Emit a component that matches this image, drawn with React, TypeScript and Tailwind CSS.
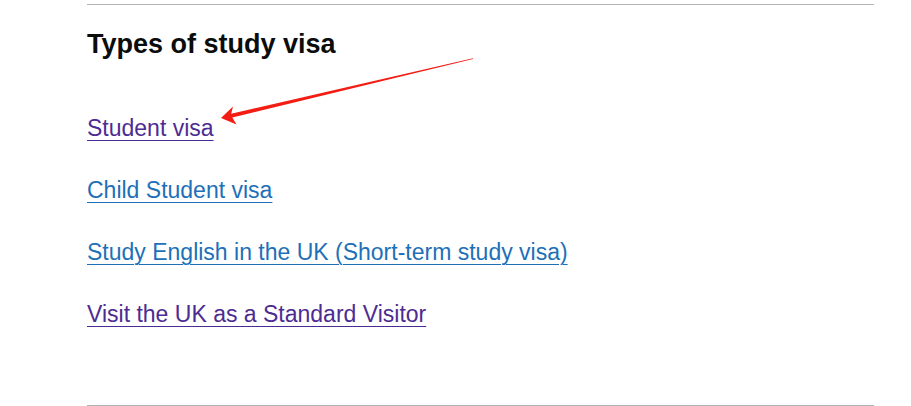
import React from 'react';

const visaLinks = [
    { label: 'Student visa', visited: true },
    { label: 'Child Student visa', visited: false },
    { label: 'Study English in the UK (Short-term study visa)', visited: false },
    { label: 'Visit the UK as a Standard Visitor', visited: true },
];

const Arrow: React.FC = () => (
    <svg className="absolute inset-0 pointer-events-none" width="911" height="406" viewBox="0 0 911 406">
        <polygon
            points="221,118 233,106.5 231.2,113.8 473,58.2 473,59 232.3,117.6 236.5,124.5"
            fill="#f41d14"
        />
    </svg>
);

const App: React.FC = () => {
    return (
        <div className="relative w-[911px] h-[406px] bg-white overflow-hidden font-['Liberation_Sans',Arial,sans-serif]">
            <div className="ml-[87px] w-[787px] pt-[4px]">
                <div className="border-t border-[#b1b4b6] pt-[23px]">
                    <h2 className="text-[27px] leading-[32px] font-bold text-[#0b0c0c]">Types of study visa</h2>
                    <ul className="mt-[53px] flex flex-col gap-[32px]">
                        {visaLinks.map(link => (
                            <li key={link.label} className="text-[23px] leading-[30px]">
                                <a
                                    href="#"
                                    className={`underline decoration-1 underline-offset-[4px] ${link.visited ? 'text-[#4c2c92]' : 'text-[#1d70b8]'}`}
                                >
                                    {link.label}
                                </a>
                            </li>
                        ))}
                    </ul>
                    <div className="mt-[76px] border-t border-[#b1b4b6]"></div>
                </div>
            </div>
            <Arrow />
        </div>
    );
};

export default App;
